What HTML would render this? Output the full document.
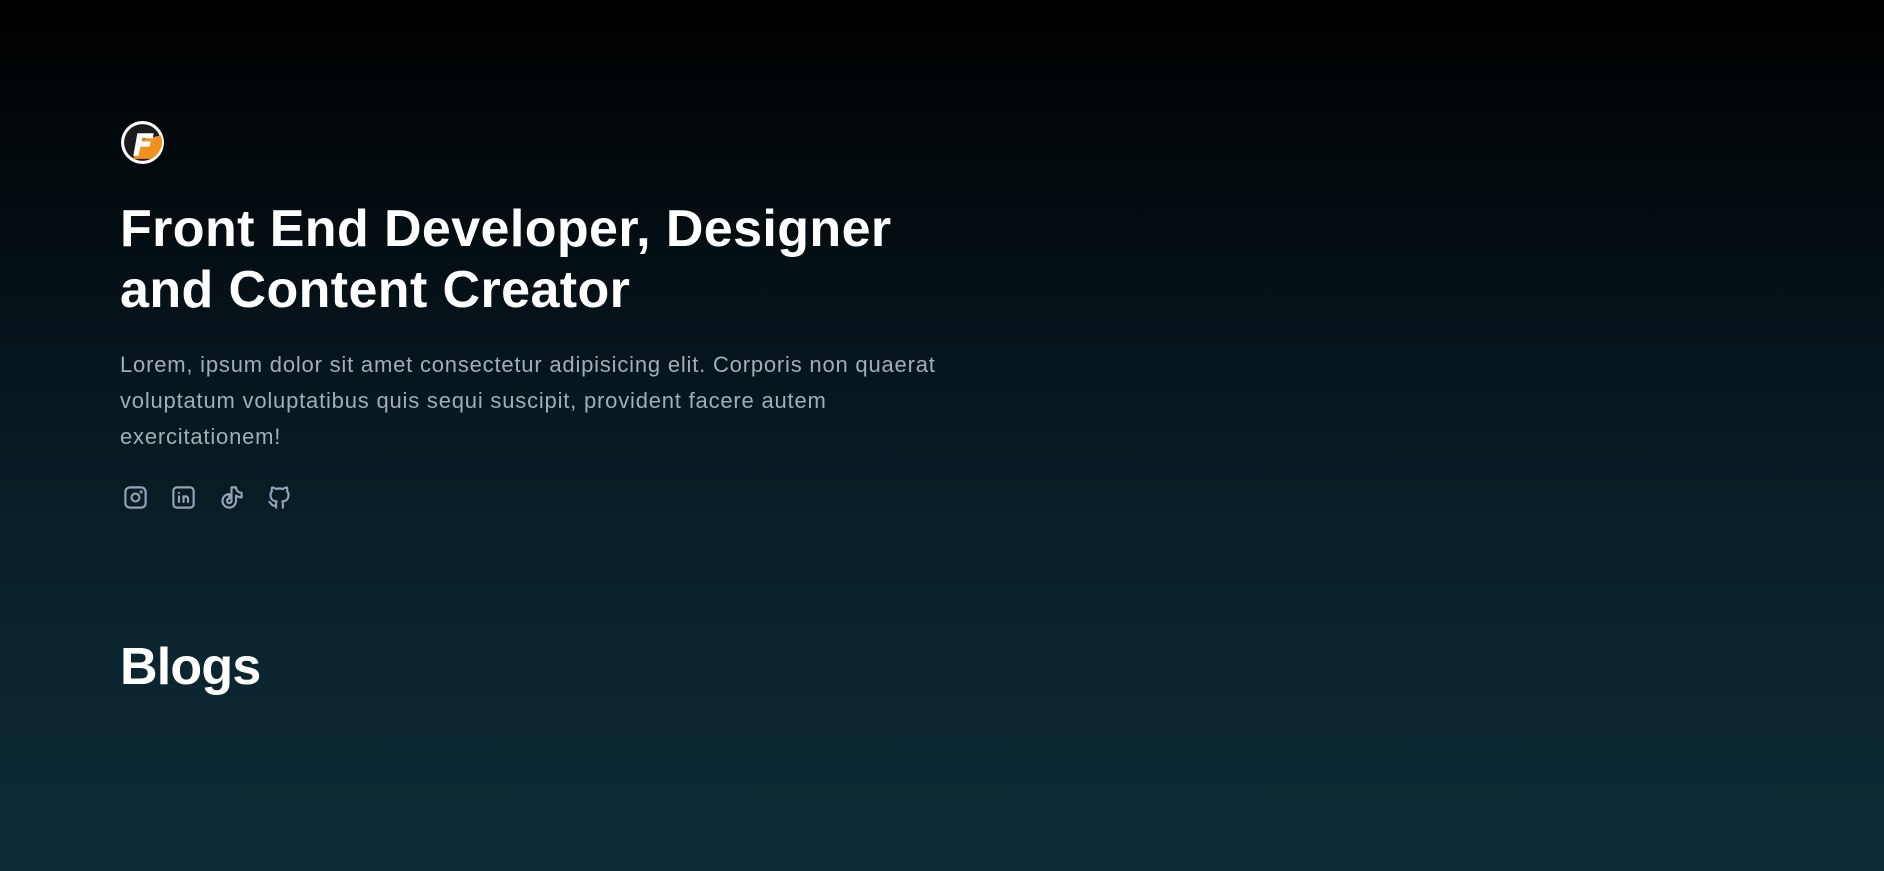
<!DOCTYPE html>
<html><head><style>
html,body{margin:0;padding:0;width:1884px;height:871px;overflow:hidden}
body{background:linear-gradient(180deg,#000 0%,#051218 35%,#0b2530 75%,#0d2b37 100%);font-family:"Liberation Sans",sans-serif;color:#fff}
.logo{position:absolute;left:120px;top:120px;width:45px;height:45px}
h1{position:absolute;left:120px;top:199px;margin:0;font-size:52px;line-height:61px;font-weight:bold;letter-spacing:0.4px;width:1000px}
p{position:absolute;left:120px;top:347px;margin:0;font-size:22px;line-height:36px;color:#a3adb8;width:830px;letter-spacing:0.8px}
.icons{position:absolute;left:122px;top:484px;display:flex;gap:21px}
.icons svg{width:27px;height:27px;stroke:#94a3b8;fill:none;stroke-width:1.9;stroke-linecap:round;stroke-linejoin:round}
h2{position:absolute;left:120px;top:637px;margin:0;font-size:52px;font-weight:bold;letter-spacing:-0.8px}
</style></head><body>
<svg class="logo" viewBox="0 0 44 44">
<circle cx="22" cy="22" r="21" fill="#fff"/>
<circle cx="22" cy="22" r="18" fill="#1c1c1c"/>
<path d="M13 38 L17 20 L40 15 A18 18 0 0 1 30 38 Z" fill="#f0901f"/>
<path d="M17 13 H33 L32 18 H22 L21 21 H30 L29 26 H20 L18 35 H13 Z" fill="#fff"/>
</svg>
<h1>Front End Developer, Designer<br>and Content Creator</h1>
<p>Lorem, ipsum dolor sit amet consectetur adipisicing elit. Corporis non quaerat voluptatum voluptatibus quis sequi suscipit, provident facere autem exercitationem!</p>
<div class="icons">
<svg viewBox="0 0 24 24"><rect x="3" y="3" width="18" height="18" rx="4"/><circle cx="12" cy="12" r="3.5"/><circle cx="17" cy="7" r=".5"/></svg>
<svg viewBox="0 0 24 24"><rect x="3" y="3" width="18" height="18" rx="3"/><path d="M8 11v5M8 8v.01M12 16v-5M16 16v-3a2 2 0 0 0-4 0"/></svg>
<svg viewBox="0 0 24 24"><path d="M21 7.9v4a9 9 0 0 1-5-1.6V15a6 6 0 1 1-6-6v4a2 2 0 1 0 2 2V3h4a5 5 0 0 0 5 4.9z"/></svg>
<svg viewBox="0 0 24 24"><path d="M9 19c-4.3 1.4-4.3-2.5-6-3m12 5v-3.5c0-1 .1-1.4-.5-2 2.8-.3 5.5-1.4 5.5-6a4.6 4.6 0 0 0-1.3-3.2 4.2 4.2 0 0 0-.1-3.2s-1.1-.3-3.5 1.3a12.3 12.3 0 0 0-6.2 0C6.5 2.8 5.4 3.1 5.4 3.1a4.2 4.2 0 0 0-.1 3.2A4.6 4.6 0 0 0 4 9.5c0 4.6 2.7 5.7 5.5 6-.6.6-.6 1.2-.5 2V21"/></svg>
</div>
<h2>Blogs</h2>
</body></html>
